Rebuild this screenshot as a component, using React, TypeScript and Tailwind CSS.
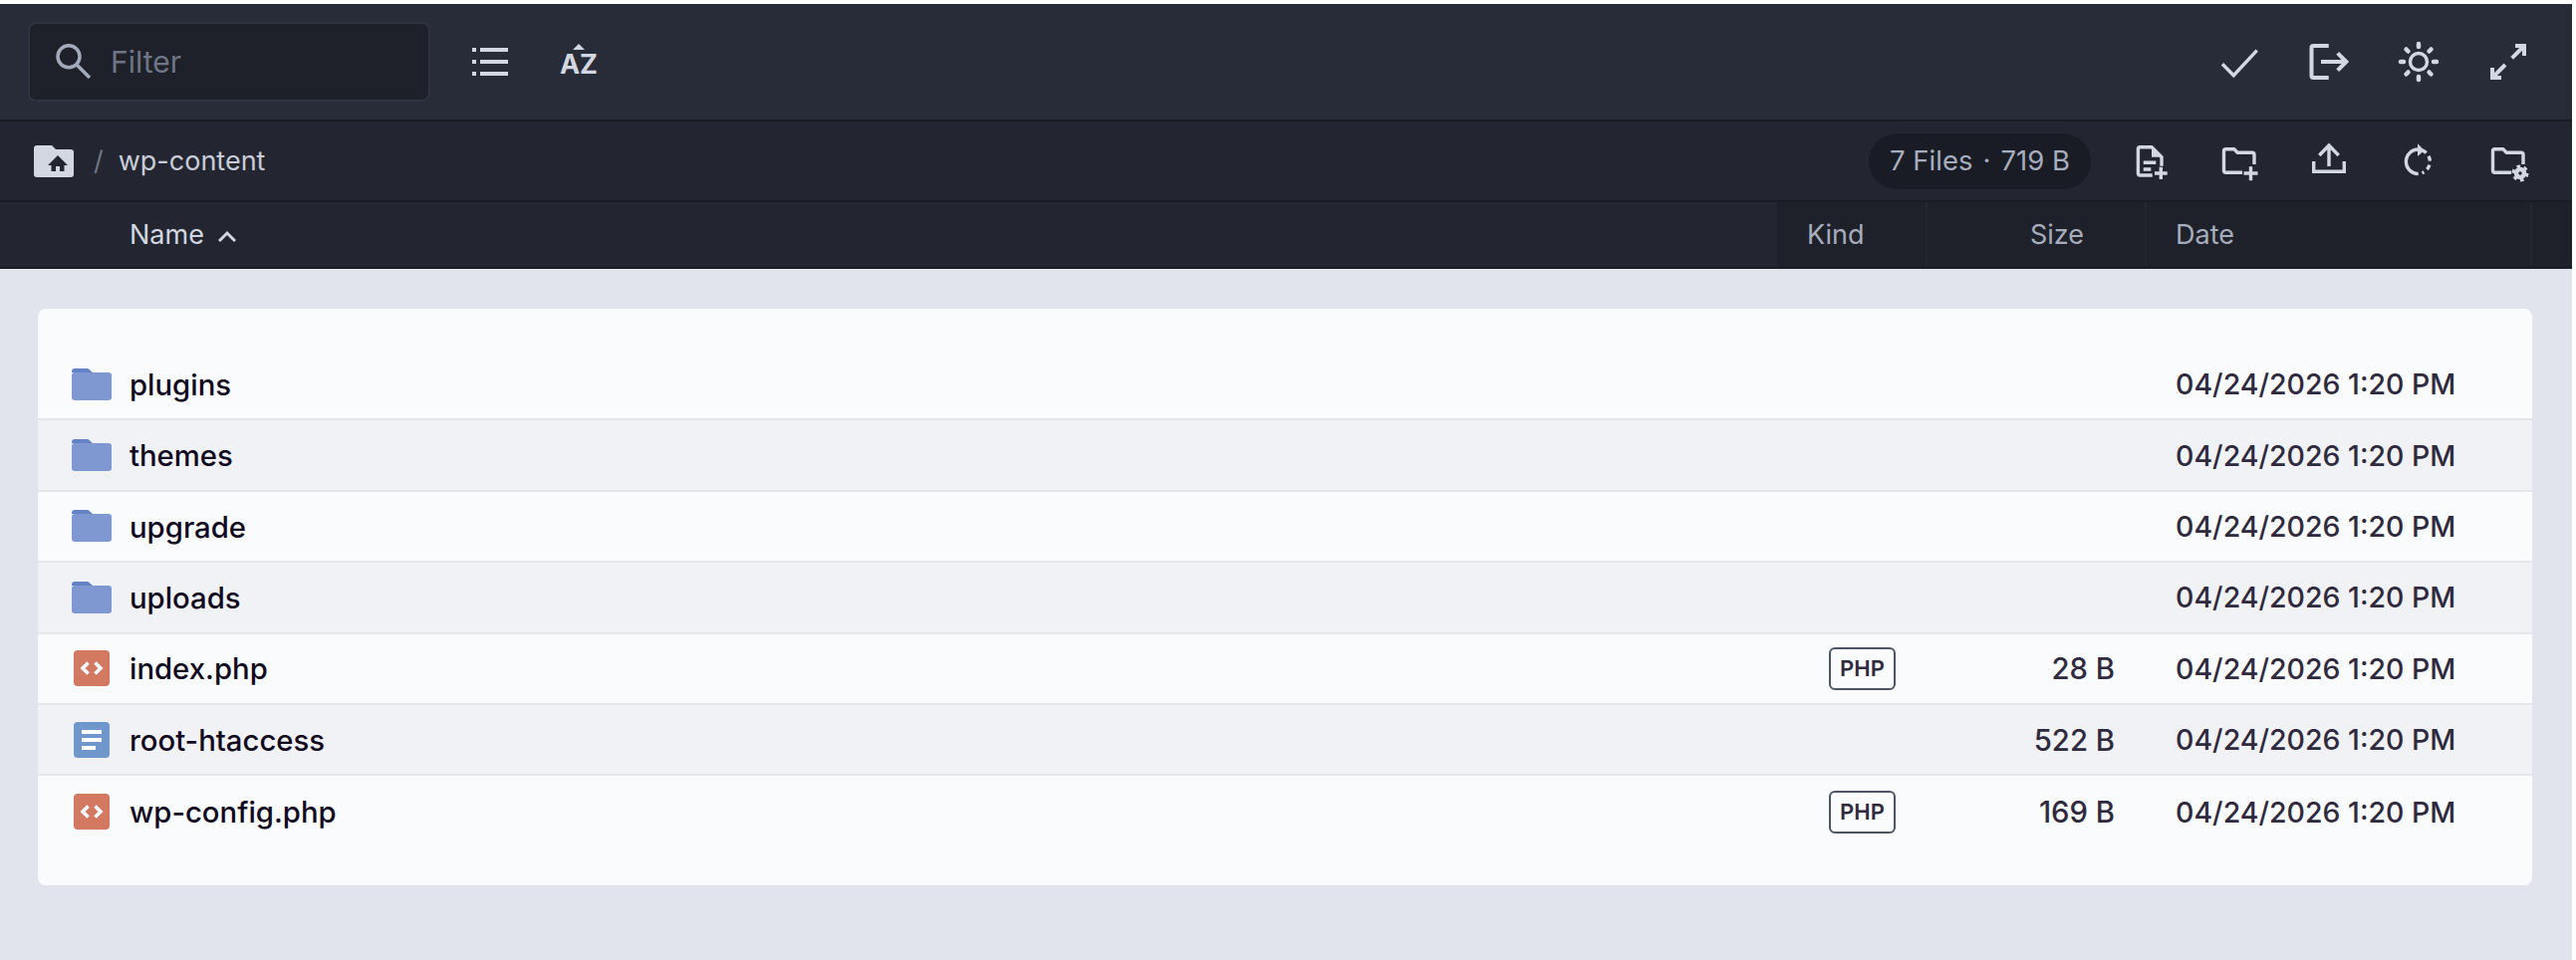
import type { ReactNode } from "react";

const rows = [
  { name: "plugins", type: "folder" },
  { name: "themes", type: "folder" },
  { name: "upgrade", type: "folder" },
  { name: "uploads", type: "folder" },
  { name: "index.php", type: "code", kind: "PHP", size: "28 B" },
  { name: "root-htaccess", type: "text", size: "522 B" },
  { name: "wp-config.php", type: "code", kind: "PHP", size: "169 B" },
];

function Icon({ children }: { children: ReactNode }) {
  return (
    <svg
      viewBox="0 0 48 48"
      fill="none"
      stroke="currentColor"
      strokeWidth="3.4"
      className="h-12 w-12"
    >
      {children}
    </svg>
  );
}

const folderOutline = (
  <path
    d="M27 35.300H10.500a2 2 0 0 1-2-2V13.800a2 2 0 0 1 2-2H19l3 3.400h15a2 2 0 0 1 2 2V27"
    strokeLinejoin="round"
  />
);

function FileIcon({ type }: { type: string }) {
  if (type === "folder") {
    return (
      <svg viewBox="0 0 40 32" className="h-8 w-10">
        <path d="M3 0h12c1.500 0 2.500.6 3.500 1.700L21 4H0V3a3 3 0 0 1 3-3z" fill="#6482c4" />
        <path d="M3 4h34a3 3 0 0 1 3 3v22a3 3 0 0 1-3 3H3a3 3 0 0 1-3-3V7a3 3 0 0 1 3-3z" fill="#8098d1" />
      </svg>
    );
  }
  if (type === "code") {
    return (
      <svg viewBox="0 0 36 36" className="h-9 w-9">
        <rect width="36" height="36" rx="4" fill="#d37861" />
        <path d="M14.500 12.500L9 18l5.500 5.500M21.500 12.500L27 18l-5.500 5.500" fill="none" stroke="#fbfbfd" strokeWidth="3.6" />
      </svg>
    );
  }
  return (
    <svg viewBox="0 0 36 36" className="h-9 w-9">
      <rect width="36" height="36" rx="4" fill="#6f97cb" />
      <path d="M8 8h20v4H8zM8 16h20v4H8zM8 24h14v4H8z" fill="#fbfbfd" />
    </svg>
  );
}

export default function App() {
  return (
    <div className="h-[964px] w-[2586px] bg-white pt-1 pr-1 font-['Inter',sans-serif]">
      <div className="h-[960px] bg-[#e1e4ec]">
        <header className="flex h-[118px] items-center justify-between border-b-2 border-[#1a1c24] bg-[#282c38] pr-[40px] pl-[28px]">
          <div className="flex items-center">
            <div className="flex h-20 w-[404px] items-center rounded-lg border-2 border-[#2f3340] bg-[#1e2129] pl-[26px] text-[#6f7587]">
              <svg viewBox="0 0 36 36" fill="none" stroke="#a3a9ba" strokeWidth="3.5" className="h-9 w-9">
                <circle cx="13" cy="12.700" r="11" />
                <path d="M21 21l13 13" />
              </svg>
              <span className="ml-[19px] text-[30px]">Filter</span>
            </div>
            <svg viewBox="0 0 36 28" fill="#d3d7e2" className="ml-[42px] h-7 w-9">
              <path d="M0 0h4v4H0zM8 0h28v4H8zM0 12h4v4H0zM8 12h28v4H8zM0 24h4v4H0zM8 24h28v4H8z" />
            </svg>
            <div className="mb-[3px] ml-[53px] flex w-9 flex-col items-center text-[27px] leading-[26px] font-bold text-[#d3d7e2]">
              <svg viewBox="0 0 12 6" fill="currentColor" className="mb-[2px] h-[6px] w-3">
                <path d="M6 0l6 6H0z" />
              </svg>
              <span>AZ</span>
            </div>
          </div>
          <div className="flex items-center gap-[42px] text-[#d3d7e2]">
            <Icon>
              <path d="M7 26.300l11.300 11.400L41.700 12.700" />
            </Icon>
            <Icon>
              <path d="M23.700 8H8.500a2 2 0 0 0-2 2v28a2 2 0 0 0 2 2h15.200" strokeWidth="4" />
              <path d="M16 24h25M32.700 15.300l8.700 8.700-8.700 8.700" strokeWidth="4" />
            </Icon>
            <Icon>
              <circle cx="24" cy="24" r="8.500" />
              <path
                d="M24 6v3M24 39v3M6 24h3M39 24h3M11.500 11.500l2 2M34.500 34.500l2 2M11.500 36.500l2-2M34.500 13.500l2-2"
                strokeWidth="4.500"
                strokeLinecap="round"
              />
            </Icon>
            <Icon>
              <path d="M39.500 8.500L27.700 20.300M31 8h9v10M8.500 39.500L21 27M17 40H8v-10" strokeWidth="4" />
            </Icon>
          </div>
        </header>
        <div className="flex h-[81px] items-center justify-between border-b-2 border-[#1a1c24] bg-[#232630] pr-[40px] pl-[34px]">
          <div className="flex items-center text-[27px] text-[#c9cdd9]">
            <svg viewBox="0 0 40 32" className="h-8 w-10">
              <path d="M3 0h15l4 4h15a3 3 0 0 1 3 3v22a3 3 0 0 1-3 3H3a3 3 0 0 1-3-3V3a3 3 0 0 1 3-3z" fill="#d3d7e2" />
              <path d="M24 10l10 10h-3.500v6H26v-5h-4v5h-4.500v-6H14z" fill="#232630" />
            </svg>
            <span className="ml-[20px] pt-[2px] text-[#6f7587]">/</span>
            <span className="ml-[15px] pt-[2px]">wp-content</span>
          </div>
          <div className="flex items-center text-[#d3d7e2]">
            <div className="mr-[35px] flex h-14 w-[223px] items-center justify-center rounded-full bg-[#191c25] text-[27.500px] text-[#a7adbd]">
              7 Files
              <span className="mx-[10px]">·</span>
              719 B
            </div>
            <div className="flex items-center gap-[42px]">
              <Icon>
                <g transform="translate(2 0)">
                  <path d="M24.700 38H12.400a2 2 0 0 1-2-2V11.700a2 2 0 0 1 2-2H24l10 10v9" />
                  <path d="M24 9.700v10h10z" fill="currentColor" stroke="none" />
                  <path d="M15.700 25.300h12.600M15.700 32h7.600M27 36h12.700M33.300 29.700V42" />
                </g>
              </Icon>
              <Icon>
                {folderOutline}
                <path d="M28.500 36h14M35.500 29.300v14" />
              </Icon>
              <Icon>
                <path d="M8.700 24v10.300h30.600V24M24 29V8M14.300 18L24 8l9.700 10" />
              </Icon>
              <Icon>
                <path d="M23.700 12a12.300 12.300 0 0 0 0 24.600" />
                <path d="M27.500 12.800a12.300 12.300 0 0 1 0 22.900" strokeDasharray="5 4" />
                <path d="M23 6.300l6.700 6.700-6.700 6z" fill="currentColor" stroke="none" />
              </Icon>
              <Icon>
                {folderOutline}
                <circle cx="36" cy="36" r="4" strokeWidth="4.500" />
                <circle cx="36" cy="36" r="7" strokeWidth="3" strokeDasharray="3.660 3.670" />
              </Icon>
            </div>
          </div>
        </div>
        <div className="flex h-[67px] border-b-2 border-[#1a1c24] bg-[#1e2129] pr-[40px] pt-0 text-[27px] text-[#a7adbd]">
          <div className="flex w-[1782px] items-center bg-[#232630] pt-[2px] pl-[130px] text-[#d3d7e2]">
            Name
            <svg viewBox="0 0 18 12" fill="none" stroke="currentColor" strokeWidth="3" className="ml-[14px] h-3 w-[18px]">
              <path d="M1 11l8-8 8 8" />
            </svg>
          </div>
          <div className="flex w-[151px] items-center border-l-2 border-[#232630] pt-[2px] pl-[30px]">Kind</div>
          <div className="flex w-[220px] items-center justify-end border-l-2 border-[#232630] pt-[2px] pr-[61px]">Size</div>
          <div className="flex flex-1 items-center border-x-2 border-[#232630] pt-[2px] pl-[29px]">Date</div>
        </div>
        <main className="px-[40px] pt-10 pl-[38px]">
          <div className="h-[579px] rounded-lg bg-[#fafbfd] pt-[41px]">
            {rows.map((row, i) => (
              <div
                key={row.name}
                className={`flex h-[71.4px] items-center ${i < rows.length - 1 ? "border-b-2 border-[#e4e6ec]" : ""} ${i % 2 === 1 ? "bg-[#f1f2f6]" : ""}`}
              >
                <div className="w-[92px] pl-[34px]">
                  <div className="flex w-10 justify-center">
                    <FileIcon type={row.type} />
                  </div>
                </div>
                <span className="w-[1706px] pt-[2px] text-[29.300px] font-medium text-[#110a1f]">{row.name}</span>
                <div className="w-[67px]">
                  {row.kind ? (
                    <span className="flex h-[43px] w-[67px] items-center justify-center rounded-md border-2 border-[#4b5468] text-[22px] font-semibold text-[#2f2a3d]">
                      {row.kind}
                    </span>
                  ) : null}
                </div>
                <span className="w-[220px] pt-[2px] text-right text-[29.300px] font-medium text-[#2f2a3d]">{row.size}</span>
                <span className="ml-[61px] pt-[2px] text-[28.500px] font-medium text-[#2f2a3d]">04/24/2026 1:20 PM</span>
              </div>
            ))}
          </div>
        </main>
      </div>
    </div>
  );
}
